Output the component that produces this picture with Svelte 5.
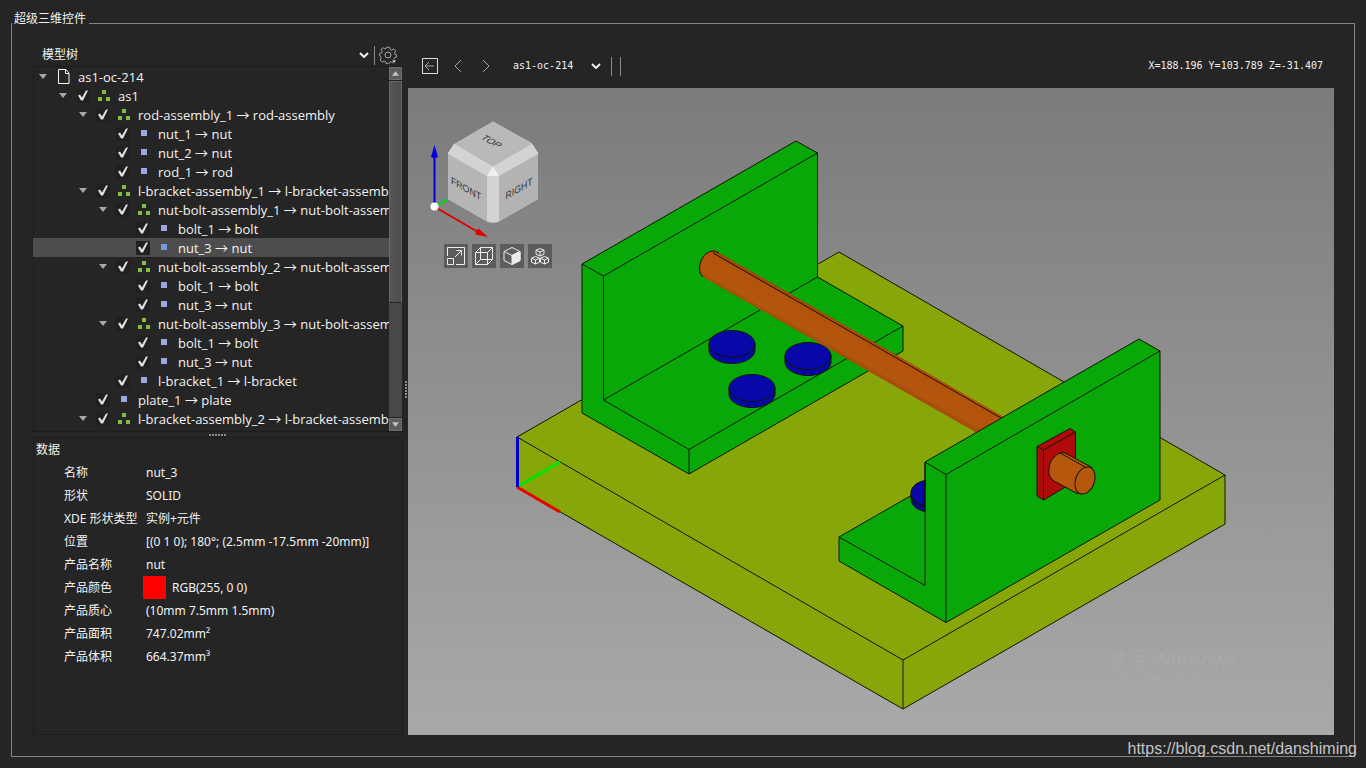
<script lang="ts">
	interface TreeNode {
		depth: number;
		kind: 'document' | 'assembly' | 'part';
		label: string;
	}

	const nodes: TreeNode[] = [
		{ depth: 0, kind: 'document', label: 'as1-oc-214' },
		{ depth: 1, kind: 'assembly', label: 'as1' },
		{ depth: 2, kind: 'assembly', label: 'rod-assembly_1 → rod-assembly' },
		{ depth: 3, kind: 'part', label: 'nut_1 → nut' },
		{ depth: 3, kind: 'part', label: 'nut_2 → nut' },
		{ depth: 3, kind: 'part', label: 'rod_1 → rod' },
		{ depth: 2, kind: 'assembly', label: 'l-bracket-assembly_1 → l-bracket-assembly' },
		{ depth: 3, kind: 'assembly', label: 'nut-bolt-assembly_1 → nut-bolt-assembly' },
		{ depth: 4, kind: 'part', label: 'bolt_1 → bolt' },
		{ depth: 4, kind: 'part', label: 'nut_3 → nut' },
		{ depth: 3, kind: 'assembly', label: 'nut-bolt-assembly_2 → nut-bolt-assembly' },
		{ depth: 4, kind: 'part', label: 'bolt_1 → bolt' },
		{ depth: 4, kind: 'part', label: 'nut_3 → nut' },
		{ depth: 3, kind: 'assembly', label: 'nut-bolt-assembly_3 → nut-bolt-assembly' },
		{ depth: 4, kind: 'part', label: 'bolt_1 → bolt' },
		{ depth: 4, kind: 'part', label: 'nut_3 → nut' },
		{ depth: 3, kind: 'part', label: 'l-bracket_1 → l-bracket' },
		{ depth: 2, kind: 'part', label: 'plate_1 → plate' },
		{ depth: 2, kind: 'assembly', label: 'l-bracket-assembly_2 → l-bracket-assembly' },
		{ depth: 3, kind: 'assembly', label: 'nut-bolt-assembly_1 → nut-bolt-assembly' }
	];

	const properties = [
		{ name: '名称', value: 'nut_3' },
		{ name: '形状', value: 'SOLID' },
		{ name: 'XDE 形状类型', value: '实例+元件' },
		{ name: '位置', value: '[(0 1 0); 180°; (2.5mm -17.5mm -20mm)]' },
		{ name: '产品名称', value: 'nut' },
		{ name: '产品颜色', value: 'RGB(255, 0 0)', swatch: 'rgb(255, 0, 0)' },
		{ name: '产品质心', value: '(10mm 7.5mm 1.5mm)' },
		{ name: '产品面积', value: '747.02mm²' },
		{ name: '产品体积', value: '664.37mm³' }
	];

	// Bolt heads on the left bracket
	const bolts = [
		{ x: 732, y: 343 },
		{ x: 808, y: 355 },
		{ x: 752, y: 387 }
	];

	let selected = $state(9);
</script>

<main class="page">
	<fieldset class="group">
		<legend>超级三维控件</legend>

		<div class="workspace">
			<aside class="sidebar">
				<header class="sidebar-header">
					<div class="combo tree-combo">
						<select aria-label="模型树">
							<option>模型树</option>
						</select>
						<svg class="chevron" viewBox="0 0 10 6"><path d="M1 1l4 4 4-4" /></svg>
					</div>
					<span class="separator"></span>
					<button class="icon-button" aria-label="设置">
						<svg class="gear" viewBox="0 0 18 18">
							<path d="M7.2 1.2h3.4l.5 2.2 1.6.7 2-1.2 2 2.2-1.3 2 .6 1.5 1.6.3v2.2l-2 .5-.7 1.6.9 1.6-2.1 2.1-1.8-1.2-1.5.6-.5 1.4H7.2l-.5-2-1.6-.7-1.9 1.2L1.100 14l1.200-1.900-.7-1.600L.7 9.900V7.400l1.800-.4.7-1.600-1.200-1.900L4.100 1.800l1.800 1.100 1-.4z" />
							<circle cx="9" cy="9" r="3" />
							<path class="gear-arrow" d="M12 14h6l-3 3.500z" />
						</svg>
					</button>
				</header>

				<section class="tree-panel">
					<ul class="tree">
						{#each nodes as node, i}
							<li class="tree-row" class:selected={selected === i} style="padding-left: {node.depth * 20}px">
								<span class="cell">
									{#if node.kind !== 'part'}
										<svg class="expander" viewBox="0 0 8 5"><path d="M0 0h8L4 5z" /></svg>
									{/if}
								</span>
								{#if node.kind !== 'document'}
									<span class="cell">
										<input type="checkbox" checked aria-label={node.label} />
									</span>
								{/if}
								<span class="cell">
									{#if node.kind === 'document'}
										<svg class="document" viewBox="0 0 14 17"><path d="M2.500 1.500h7.500l3 3.500v10.500h-10.500zM9.500 1.500v4h3.500" /></svg>
									{:else if node.kind === 'assembly'}
										<svg class="assembly" viewBox="0 0 14 12"><path d="M6 0h4v4H6zM2 7h4v4H2zM10 7h4v4h-4z" /></svg>
									{:else}
										<svg class="part" viewBox="0 0 14 12"><path d="M5 2h6v6H5z" /></svg>
									{/if}
								</span>
								<button class="tree-label" onclick={() => (selected = i)}>{node.label}</button>
							</li>
						{/each}
					</ul>
					<div class="scrollbar">
						<button aria-label="向上滚动"><svg viewBox="0 0 8 5"><path d="M0 5h8L4 0z" /></svg></button>
						<div class="track"><div class="thumb"></div></div>
						<button aria-label="向下滚动"><svg viewBox="0 0 8 5"><path d="M0 0h8L4 5z" /></svg></button>
					</div>
				</section>

				<div class="grip horizontal"><i></i></div>

				<section class="data-panel">
					<h2>数据</h2>
					<table>
						<tbody>
							{#each properties as prop}
								<tr>
									<th scope="row">{prop.name}</th>
									<td>
										<div class="value" class:has-swatch={prop.swatch}>
											{#if prop.swatch}
												<span class="swatch" style="background: {prop.swatch}"></span>
											{/if}
											{prop.value}
										</div>
									</td>
								</tr>
							{/each}
						</tbody>
					</table>
				</section>
			</aside>

			<div class="grip vertical"><i></i></div>

			<section class="viewer">
				<header class="viewer-header">
					<button class="icon-button" aria-label="返回">
						<svg class="nav" viewBox="0 0 18 18"><path d="M1.500 1.500h15v15h-15z" /><path class="dim" d="M4 9h9M8 5L4 9l4 4" /></svg>
					</button>
					<button class="icon-button" aria-label="上一个">
						<svg class="nav" viewBox="0 0 18 18"><path class="dim" d="M12 3L6 9l6 6" /></svg>
					</button>
					<button class="icon-button" aria-label="下一个">
						<svg class="nav" viewBox="0 0 18 18"><path class="dim" d="M6 3l6 6-6 6" /></svg>
					</button>
					<div class="combo document-combo">
						<select aria-label="文档">
							<option>as1-oc-214</option>
						</select>
						<svg class="chevron" viewBox="0 0 10 6"><path d="M1 1l4 4 4-4" /></svg>
					</div>
					<span class="separator"></span>
					<span class="separator"></span>
					<output class="coordinates">X=188.196 Y=103.789 Z=-31.407</output>
				</header>

				<div class="viewport">
					<svg class="model" viewBox="408 88 926 647" role="img" aria-label="as1-oc-214">
						<defs>
							<linearGradient id="rod" gradientUnits="userSpaceOnUse" x1="850" y1="328" x2="836.500" y2="352">
								<stop offset="0" stop-color="#a04608" />
								<stop offset="0.15" stop-color="#b3530b" />
								<stop offset="0.85" stop-color="#b3560e" />
								<stop offset="1" stop-color="#a64c0a" />
							</linearGradient>
						</defs>

						<!-- Plate -->
						<g class="plate">
							<path class="face" d="M839 252L1225 475V524L903 709L517 487V437z" />
							<path d="M517 437L903 660L1225 475M903 660V709" />
						</g>

						<!-- Left bracket -->
						<g class="bracket">
							<path class="face" d="M582 264L796 141L817.500 153V277L903 326V351L689 474L582 413z" />
							<path d="M582 264L603.500 276L817.500 153M603.500 276V400L817.500 277M603.500 400L689 449.500L903 326M689 449.500V474" />
						</g>

						{#each bolts as bolt}
							<g class="bolt">
								<path class="face" d="M{bolt.x - 23} {bolt.y}v7a23 13.500 0 0 0 46 0v-7z" />
								<ellipse class="face" cx={bolt.x} cy={bolt.y + 1} rx="23" ry="13.500" />
							</g>
						{/each}

						<!-- Rod -->
						<path class="rod-body" d="M716 251L1004 417L978 433.500L703 277C697 272 699 259 707 253Q712 249 716 251z" />
						<path class="edge" d="M703 277C697 272 699 259 707 253Q712 249 719 253M713 253L1001 418" />

						<!-- Right bracket -->
						<g class="bracket">
							<path class="face" d="M925 487.500L839 537V561L946 622.500L1160 500V351L1139 339L925 462z" />
						</g>
						<g class="bolt">
							<path class="face" d="M925 480.500C917 482 911 487 911 492.500V499C911 505 917 510 925 511.500z" />
							<path d="M911 493.500C911 499 917 504 925 505.500M911 496C912 502 918 506 925 507.500" />
						</g>
						<g class="bracket">
							<path d="M839 537L925 585.500V462M925 462L946 474.500L1160 351M946 474.500V622.500" />
						</g>

						<!-- Nut and rod end -->
						<g class="nut">
							<path class="face" d="M1037 446.500L1070 428.500L1075.500 432V481L1043.500 500L1037 496z" />
							<path d="M1037 446.500L1043.500 450L1075.500 432M1043.500 450V500" />
						</g>
						<g class="rod-end">
							<path class="face" d="M1054 481C1047 477 1047 465 1054 457Q1061 450 1067 454L1092 467.500L1078 494z" />
							<ellipse class="face" cx="1085" cy="480.500" rx="9.500" ry="14" transform="rotate(20 1085 480.500)" />
							<path d="M1060 453L1086 467.500" />
						</g>

						<!-- Origin axes -->
						<g class="axes">
							<path d="M517 487L560 462" stroke="#00e600" />
							<path d="M517 487L560 512" stroke="#e60000" />
							<path d="M517.500 437V487" stroke="#0000c8" />
						</g>
					</svg>

					<div class="navigator">
						<svg class="cube" viewBox="426 118 118 122" role="img" aria-label="TOP FRONT RIGHT">
							<path d="M435 206L449 199" stroke="#00d21e" stroke-width="2" />
							<path d="M493 121.500L531.500 143L538 153V199L499 221.500Q493 224 487 221.500L448 199V153L454.500 144z" fill="#d3d3d3" />
							<path d="M493 121.500L531.500 144L493 166.500L454.500 144z" fill="#b9b9b9" />
							<path d="M448 154L487 176V221.500L448 199z" fill="#b6b6b6" />
							<path d="M538 154L499 176V221.500L538 199z" fill="#b3b3b3" />
							<path d="M493 166.500L499 176H487z" fill="#efefef" />
							<path d="M454.500 144L448 154M531.500 144l6.500 10" stroke="#ddd" />
							<g class="cube-labels">
								<text transform="matrix(.87 .5 -.87 .5 492 141)" y="4">TOP</text>
								<text transform="matrix(.87 .5 0 1 466 189)" y="3">FRONT</text>
								<text transform="matrix(.87 -.5 0 1 519 188)" y="4">RIGHT</text>
							</g>
							<path d="M434.500 206V156" stroke="#0000e0" stroke-width="2" />
							<path d="M434.500 145l3.500 12q-3.500 2-7 0z" fill="#0000e0" />
							<path d="M435 207L478 232" stroke="#e00000" stroke-width="2" />
							<path d="M488 237l-12.500-2.500q0-4 3-6z" fill="#e00000" />
							<circle cx="434.500" cy="206.500" r="4" fill="#fff" />
						</svg>

						<div class="view-buttons">
							<button aria-label="适合窗口">
								<svg viewBox="0 0 24 24"><path d="M3.500 12V3.500h17v17H12M3.500 14.500h6v6h-6zM11 13l6-6M12.500 6.500h5v5" /></svg>
							</button>
							<button aria-label="线框">
								<svg viewBox="0 0 24 24"><path d="M3.500 8.500h12v12h-12zM8.500 3.500h12v12h-12zM3.500 8.500l5-5M15.500 8.500l5-5M3.500 20.500l5-5M15.500 20.500l5-5" /></svg>
							</button>
							<button aria-label="着色">
								<svg viewBox="0 0 24 24"><path d="M12 3.500l8 4v9l-8 4-8-4v-9zM4 7.500l8 4 8-4" /><path class="solid" d="M12 11.500l8-4v9l-8 4z" /></svg>
							</button>
							<button aria-label="爆炸视图">
								<svg viewBox="0 0 24 24"><path d="M12 4.500l4 1.700v4l-4 1.800-4-1.800v-4zM8 6.200l4 1.800 4-1.800M12 8v4M7.500 12.500l4 1.700v4l-4 1.800-4-1.800v-4zM3.500 14.200l4 1.800 4-1.800M7.500 16v4M16.500 12.500l4 1.700v4l-4 1.800-4-1.800v-4zM12.500 14.200l4 1.800 4-1.800M16.500 16v4" /></svg>
							</button>
						</div>
					</div>

					<div class="activation">
						<strong>激活 Windows</strong>
						<span>转到“设置”以激活 Windows。</span>
					</div>
				</div>
			</section>
		</div>
	</fieldset>

	<a class="watermark" href="https://blog.csdn.net/danshiming">https://blog.csdn.net/danshiming</a>
</main>

<style>
	:global(body) {
		margin: 0;
		background: #252525;
	}

	* {
		box-sizing: border-box;
	}

	.page {
		position: relative;
		display: flex;
		min-height: 100vh;
		padding: 12px 11px 11px;
		color: #f2f2f2;
		font: 12px/18px 'Noto Sans', 'Noto Sans CJK SC', sans-serif;
	}

	button,
	select {
		margin: 0;
		padding: 0;
		border: 0;
		background: none;
		color: inherit;
		font: inherit;
	}

	svg {
		display: block;
		fill: none;
	}

	.group {
		flex: 1;
		min-width: 0;
		margin: 0;
		padding: 0 20px 21px 21px;
		border: 1px solid #858585;
		display: flex;
	}

	legend {
		margin-left: -21px;
		padding: 0 3px 8px 2px;
		line-height: 14px;
	}

	.workspace {
		flex: 1;
		min-width: 0;
		display: grid;
		grid-template-columns: 370px 5px minmax(0, 1fr);
		padding-top: 10px;
	}

	/* Sidebar */
	.sidebar {
		display: grid;
		grid-template-rows: 22px minmax(0, 366fr) 5px minmax(0, 298fr);
		min-height: 0;
	}

	.sidebar-header {
		display: flex;
		align-items: center;
		padding: 0 6px 0 9px;
	}

	.combo {
		display: grid;
		align-items: center;
	}

	.combo select,
	.combo svg {
		grid-area: 1 / 1;
	}

	.combo select {
		appearance: none;
		outline: none;
	}

	.combo option {
		background: #252525;
	}

	.chevron {
		justify-self: end;
		width: 10px;
		height: 6px;
		stroke: #f0f0f0;
		stroke-width: 2;
		pointer-events: none;
	}

	.tree-combo {
		flex: 1;
		padding-right: 5px;
	}

	.separator {
		width: 1px;
		height: 19px;
		background: #8a8a8a;
	}

	.icon-button {
		display: grid;
		place-items: center;
		cursor: pointer;
	}

	.gear {
		width: 18px;
		height: 18px;
		margin-left: 4px;
		stroke: #a5a5a5;
	}

	.gear-arrow {
		fill: #e0e0e0;
		stroke: #252525;
	}

	/* Model tree: takes the room the sidebar leaves it, whatever its length */
	.tree-panel {
		contain: size;
		display: flex;
		min-height: 0;
		padding-right: 1px;
		border: solid #1c1c1c;
		border-width: 1px 0;
		box-shadow: inset 1px 0 #1c1c1c;
	}

	.tree {
		flex: 1;
		min-width: 0;
		height: 100%;
		margin: 0;
		padding: 0;
		list-style: none;
		overflow: hidden;
	}

	.tree-row {
		display: flex;
		align-items: center;
		height: 19px;
		white-space: nowrap;
	}

	.tree-row.selected {
		background: #4d4d4d;
	}

	.cell {
		flex: none;
		display: grid;
		place-items: center;
		width: 20px;
	}

	.expander {
		width: 8px;
		height: 5px;
		fill: #a8a8a8;
	}

	.document {
		width: 14px;
		height: 17px;
		stroke: #f5f5f5;
	}

	.assembly,
	.part {
		width: 14px;
		height: 12px;
	}

	.assembly {
		fill: #82bd45;
	}

	.part {
		fill: #9aa7e0;
	}

	.selected .part {
		fill: #739ade;
	}

	input[type='checkbox'] {
		appearance: none;
		width: 14px;
		height: 14px;
		margin: 0;
		background: #202020;
	}

	input[type='checkbox']:checked::before {
		content: '';
		display: block;
		width: 14px;
		height: 14px;
		background: #e0e0e0;
		clip-path: polygon(2px 7px, 4px 6px, 6px 9px, 10px 2px, 12px 2px, 7px 12px, 5px 12px);
	}

	.tree-label {
		padding-left: 5px;
		font-family: 'Open Sans', 'Noto Sans CJK SC', sans-serif;
		font-size: 13px;
	}

	/* Scrollbar */
	.scrollbar {
		flex: none;
		display: flex;
		flex-direction: column;
		width: 13px;
		background: #484848;
	}

	.scrollbar button {
		display: grid;
		place-items: center;
		height: 13px;
		background: #5c5c5c;
		border: 1px solid #6e6e6e;
	}

	.scrollbar svg {
		width: 7px;
		height: 5px;
		fill: #c4c4c4;
	}

	.track {
		flex: 1;
		border: solid #222;
		border-width: 1px 0;
	}

	.thumb {
		height: 66%;
		border: 1px solid #686868;
		border-bottom-color: #222;
		background: linear-gradient(90deg, #565656, #4d4d4d);
	}

	/* Splitter grips */
	.grip {
		display: grid;
		place-items: center;
	}

	.grip i {
		background: repeating-linear-gradient(90deg, #8a8a8a 0 2px, transparent 2px 3px);
		width: 18px;
		height: 2px;
	}

	.grip.vertical i {
		background: repeating-linear-gradient(#8a8a8a 0 2px, transparent 2px 3px);
		width: 2px;
		height: 18px;
	}

	/* Data panel */
	.data-panel {
		border: 1px solid #1c1c1c;
		padding: 1px 2px;
	}

	h2 {
		margin: 0;
		font: inherit;
		line-height: 22px;
	}

	table {
		border-collapse: collapse;
	}

	th,
	td {
		height: 23px;
		padding: 0;
		font-weight: 400;
		text-align: left;
		white-space: nowrap;
	}

	th {
		width: 110px;
		padding-left: 28px;
	}

	.value {
		display: flex;
		align-items: center;
	}

	.has-swatch {
		margin-left: -3px;
		gap: 6px;
	}

	.swatch {
		width: 23px;
		height: 23px;
	}

	/* Viewer */
	.viewer {
		display: flex;
		flex-direction: column;
		min-width: 0;
	}

	.viewer-header {
		display: flex;
		align-items: center;
		height: 44px;
		gap: 10px;
		padding: 0 11px 0 13px;
		font-family: 'DejaVu Sans Mono', 'Liberation Mono', monospace;
		font-size: 10px;
	}

	.viewer-header .separator {
		margin-right: -2px;
	}

	.nav {
		width: 18px;
		height: 18px;
		stroke: #dcdcdc;
	}

	.dim {
		stroke: #a8a8a8;
	}

	.document-combo {
		width: 88px;
		margin-left: 8px;
	}

	.coordinates {
		margin-left: auto;
	}

	.viewport {
		position: relative;
		flex: 1;
		display: flex;
		min-height: 0;
		contain: size;
		background: linear-gradient(#7b7b7b, #a9a9a9);
	}

	.model {
		width: 100%;
		height: 100%;
	}

	.model path,
	.model ellipse {
		stroke-linejoin: round;
	}

	.plate,
	.bracket,
	.bolt,
	.nut,
	.rod-end {
		stroke: #101400;
		stroke-width: 1;
	}

	.plate .face {
		fill: #87a609;
	}

	.bracket .face {
		fill: #08a808;
	}

	.bolt .face {
		fill: #0808a8;
	}

	.nut .face {
		fill: #b00a0a;
	}

	.rod-end .face {
		fill: #b5570d;
	}

	.rod-body {
		fill: url(#rod);
	}

	.edge {
		stroke: #1e0f00;
	}

	.axes {
		stroke-width: 3;
	}

	/* View cube and its buttons float over the scene */
	.navigator {
		position: absolute;
		top: 30px;
		left: 18px;
	}

	.cube {
		width: 118px;
		height: 122px;
	}

	.cube-labels {
		fill: #333;
		font: 10px 'Liberation Sans', sans-serif;
		text-anchor: middle;
	}

	.view-buttons {
		display: flex;
		gap: 4px;
		margin: 4px 0 0 18px;
	}

	.view-buttons button {
		width: 24px;
		height: 24px;
		background: #5c5c5c;
		cursor: pointer;
	}

	.view-buttons svg {
		stroke: #ececec;
	}

	.view-buttons .solid {
		fill: #ececec;
	}

	.activation {
		position: absolute;
		right: 68px;
		bottom: 41px;
		display: grid;
		color: #a9a9a9;
		line-height: 20px;
	}

	.activation strong {
		font-size: 20px;
		font-weight: 400;
		line-height: 28px;
	}

	.watermark {
		position: absolute;
		right: 9px;
		bottom: 9px;
		color: #c4c4c4;
		font: 16px/20px 'Liberation Sans', Arial, sans-serif;
		text-decoration: none;
	}
</style>
